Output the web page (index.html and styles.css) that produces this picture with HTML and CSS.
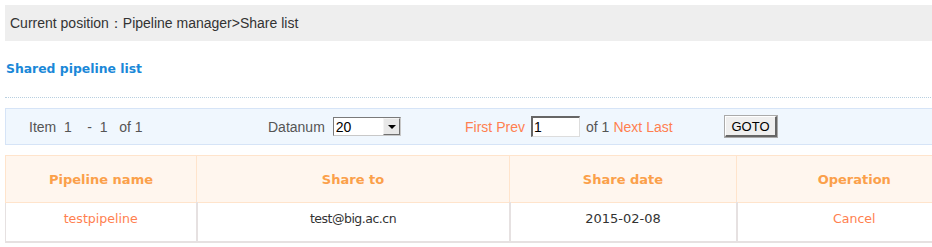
FILE: index.html
```html
<!DOCTYPE html>
<html lang="en">
<head>
    <meta charset="UTF-8">
    <title>Share list</title>
    <link rel="stylesheet" href="styles.css">
</head>
<body>
    <div class="page">
        <div class="crumb">Current position：Pipeline manager&gt;Share list</div>
        <h2 class="title">Shared pipeline list</h2>
        <div class="pager">
            <span class="pg-item">Item&nbsp; 1 &nbsp;&nbsp; - &nbsp;1 &nbsp;&nbsp;of 1</span>
            <span class="pg-num">Datanum
                <span class="sel-wrap">
                    <select class="pg-select">
                        <option>20</option>
                        <option>50</option>
                    </select>
                    <span class="sel-arrow"></span>
                </span>
            </span>
            <span class="pg-nav">
                <a href="#">First</a> <a href="#">Prev</a>
                <input type="text" class="pg-input" value="1">
                of 1 <a href="#">Next</a> <a href="#">Last</a>
            </span>
            <button class="pg-btn">GOTO</button>
        </div>
        <table class="list">
            <thead>
                <tr>
                    <th class="c1">Pipeline name</th>
                    <th class="c2">Share to</th>
                    <th class="c3">Share date</th>
                    <th class="c4">Operation</th>
                </tr>
            </thead>
            <tbody>
                <tr>
                    <td><a href="#">testpipeline</a></td>
                    <td class="mail">test@big.ac.cn</td>
                    <td>2015-02-08</td>
                    <td><a href="#">Cancel</a></td>
                </tr>
            </tbody>
        </table>
    </div>
</body>
</html>
```
FILE: styles.css
```css
body {
    margin: 0;
    font-family: "Liberation Sans", Arial, sans-serif;
    overflow: hidden;
}
.page {
    width: 968px;
    padding: 5px 0 0 5px;
}
.crumb {
    background: #eeeeee;
    height: 36px;
    line-height: 36px;
    padding-left: 5px;
    font-size: 14px;
    color: #333;
}
.title {
    margin: 0;
    height: 56px;
    line-height: 56px;
    padding-left: 1px;
    font-family: "DejaVu Sans", Verdana, sans-serif;
    font-size: 12.4px;
    font-weight: bold;
    color: #1a88d8;
    border-bottom: 1px dotted #b8cfe0;
}
.pager {
    margin-top: 10px;
    height: 35px;
    background: #f0f7fe;
    border: 1px solid #d6e4f7;
    display: flex;
    align-items: center;
    font-size: 14px;
    color: #555;
}
.pg-item {
    margin-left: 23px;
    width: 239px;
}
.pg-num {
    width: 197px;
    display: flex;
    align-items: center;
    gap: 8px;
}
.sel-wrap {
    position: relative;
    display: inline-block;
    width: 68px;
    height: 19px;
}
.pg-select {
    appearance: none;
    -webkit-appearance: none;
    width: 68px;
    height: 19px;
    box-sizing: border-box;
    font-size: 14px;
    font-family: "Liberation Sans", Arial, sans-serif;
    padding: 0 0 0 2px;
    border: 1px solid #7a7a7a;
    border-right-color: #c8c8c8;
    border-bottom-color: #c8c8c8;
    background: #fff;
    color: #000;
    border-radius: 0;
}
.sel-arrow {
    position: absolute;
    right: 1px;
    top: 1px;
    width: 15px;
    height: 15px;
    background: #e8e8e8;
    border: 1px solid #f4f4f4;
    border-right-color: #707070;
    border-bottom-color: #707070;
    pointer-events: none;
}
.sel-arrow::after {
    content: "";
    position: absolute;
    left: 4px;
    top: 6px;
    border-left: 4px solid transparent;
    border-right: 4px solid transparent;
    border-top: 4px solid #000;
}
.pg-nav {
    width: 260px;
    display: flex;
    align-items: center;
    gap: 4px;
}
.pg-nav a {
    color: #ff7f50;
    text-decoration: none;
}
.pg-input {
    width: 49px;
    height: 21px;
    box-sizing: border-box;
    border: 1px solid #ddd;
    border-top: 2px solid #666;
    border-left: 2px solid #666;
    font-size: 14px;
    font-family: "Liberation Sans", Arial, sans-serif;
    padding: 0 1px;
    margin: 0 2px;
}
.pg-btn {
    width: 52px;
    height: 21px;
    padding: 0;
    font-size: 13px;
    font-family: "Liberation Sans", Arial, sans-serif;
    background: #efefef;
    border: 1px solid #fff;
    border-right: 2px solid #666;
    border-bottom: 2px solid #666;
    color: #000;
    outline: 1px solid #aaa;
}
.list {
    margin-top: 10px;
    width: 968px;
    table-layout: fixed;
    border-collapse: collapse;
    font-family: "DejaVu Sans", Verdana, sans-serif;
    font-size: 13px;
}
.list th {
    height: 46px;
    padding: 0;
    background: #fff6ee;
    border: 1px solid #ffe4cc;
    color: #fba04a;
    font-weight: bold;
}
.c1 { width: 190px; }
.c2 { width: 312px; }
.c3 { width: 226px; }
.list td {
    height: 30px;
    border: 2px solid #e6e1e1;
    border-top: 0;
    text-align: center;
    vertical-align: top;
    padding: 8px 0 0;
    color: #333;
    font-size: 12.6px;
}
.list td:first-child {
    border-left: 1px solid #e6e1e1;
}
.list td:nth-child(2) {
    border-left: 1px solid #e6e1e1;
}
.list td.mail {
    font-size: 12.5px;
    letter-spacing: -0.5px;
}
.list td:nth-child(3) {
    font-size: 13px;
}
.list td a {
    color: #ff7f50;
    text-decoration: none;
}
```
